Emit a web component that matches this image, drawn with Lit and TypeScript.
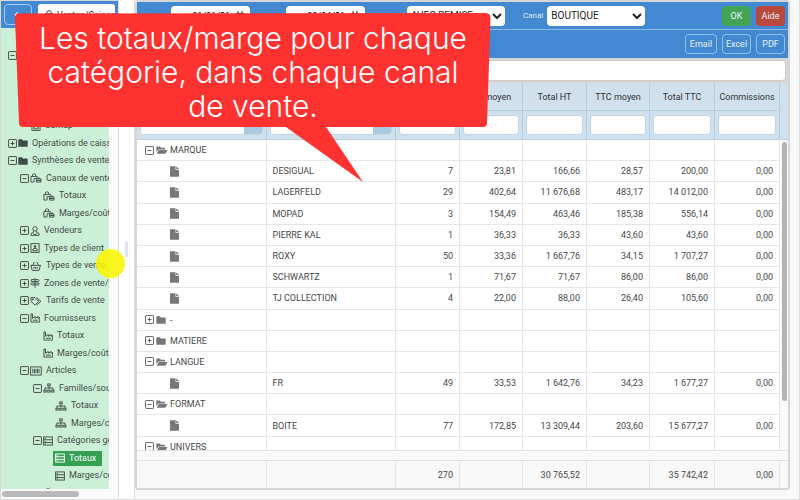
import { LitElement, html, css, svg, nothing } from "lit";
import { customElement, property } from "lit/decorators.js";
import { classMap } from "lit/directives/class-map.js";

const ICONS: Record<string, unknown> = {
  minus: svg`<rect x="1" y="1" width="14" height="14" rx="1"/><path d="M4.500 8h7"/>`,
  plus: svg`<rect x="1" y="1" width="14" height="14" rx="1"/><path d="M4.500 8h7M8 4.500v7"/>`,
  folder: svg`<path class="solid" d="M0.500 3q0-1 1-1h4.500l2 2h6.500q1 0 1 1v9h-15z"/>`,
  open: svg`<path class="solid" d="M0.500 11V3.500q0-1 1-1h4.500l2 2h5.500q1 0 1 1V7H4zM1 14l3.500-6h14l-3.500 6z"/>`,
  file: svg`<path class="solid" d="M1.500 0.500h8v5h5v10h-13zM10.500 0.500l4 4h-4z"/>`,
  bags: svg`<path d="M6 14.500H1.500v-9h10V8M4 5.500V3q0-1.500 1.500-1.500h2Q9 1.500 9 3v2.500M6.500 14.500V9h4v5.500M10.500 14.500h7V9.500h-7M12.500 9.500V8h3v1.500M10.500 12h7"/>`,
  bag: svg`<path d="M2 6h12l1 9H1zM4.500 8V4Q5 1 8 1t3.500 3v4"/>`,
  person: svg`<circle cx="8" cy="4.500" r="3.500"/><path d="M5.500 8v2L1.500 12v3h13v-3l-4-2V8M5 12l3 2 3-2"/>`,
  client: svg`<rect x="1.500" y="1" width="13" height="14"/><circle class="solid" cx="8" cy="5.500" r="2"/><path d="M4.500 12.500V10q3.500-3 7 0v2.500z"/>`,
  basket: svg`<path d="M0.500 7h17M1.500 7l2 8h11l2-8M4.500 7L7 1.500M13.500 7L11 1.500M6.500 9.500v3M9 9.500v3M11.500 9.500v3"/>`,
  sign: svg`<path d="M8 0.500v15M2 2.500h11l2 1.500-2 1.500H2zM14 8H3L1 9.500 3 11h11z"/>`,
  tags: svg`<path d="M1.500 2.500H8l6 6-6 6-6.500-6zM10.500 2.500l7 6-7 6"/><circle cx="4.500" cy="5.500" r="1"/>`,
  factory: svg`<path d="M1.500 1.500H4v7l4.500-3v3l4.500-3v3l2.500-1.500v7.500h-14zM4.500 11.500h8"/>`,
  barcode: svg`<rect x="1" y="1.500" width="17" height="13"/><path d="M4.500 4.500v7M7 4.500v7M9.500 4.500v7M12 4.500v7M14.500 4.500v7"/>`,
  tree: svg`<path d="M9.500 5v5M3 11V8h13v3"/><rect x="7.500" y="1.500" width="4" height="3"/><rect x="1.500" y="11.500" width="3.500" height="3"/><rect x="7.500" y="11.500" width="4" height="3"/><rect x="14" y="11.500" width="3.500" height="3"/>`,
  rows: svg`<rect x="1" y="1.500" width="14" height="13"/><path d="M1 6h14M1 10.500h14M3 4h1.500M3 8.500h1.500M3 12.500h1.500"/>`,
  calendar: svg`<path class="solid" d="M1 3h14v3H1zM1 7h14v8H1zM4 0.500h2v3H4zM10 0.500h2v3h-2z"/>`,
  left: svg`<path d="M14 8H3M8 3L3 8l5 5"/>`,
};
const WIDE = new Set(["bags", "tags", "barcode", "open", "tree", "basket"]);

@customElement("ui-icon")
class UiIcon extends LitElement {
  @property() name = "";
  static styles = css`
    :host { display: inline-flex; flex: none; }
    svg { display: block; height: 10px; fill: none; stroke: currentColor; stroke-width: 1.500; }
    .toggle { height: 9px; }
    .file { height: 11px; }
    .solid { fill: currentColor; stroke: none; }
  `;
  render() {
    const w = WIDE.has(this.name) ? 19 : 16;
    const toggle = this.name === "minus" || this.name === "plus";
    return html`<svg class=${classMap({ toggle, file: this.name === "file" })} viewBox="0 0 ${w} 16" aria-hidden="true">${ICONS[this.name]}</svg>`;
  }
}

type Node = { level: number; toggle?: string; icon: string; label: string; current?: boolean };
const n = (level: number, toggle: string, icon: string, label: string, current = false): Node =>
  ({ level, toggle, icon, label, current });

const NODES: Node[] = [
  n(0, "minus", "folder", "Ventes"),
  n(1, "plus", "folder", "Documents"),
  n(1, "plus", "folder", "Clients"),
  n(1, "plus", "folder", "Saisies"),
  n(1, "", "client", "Samap"),
  n(0, "plus", "folder", "Opérations de caisse"),
  n(0, "minus", "folder", "Synthèses de vente"),
  n(1, "minus", "bags", "Canaux de vente"),
  n(2, "", "bags", "Totaux"),
  n(2, "", "bags", "Marges/coûts"),
  n(1, "plus", "person", "Vendeurs"),
  n(1, "plus", "client", "Types de client"),
  n(1, "plus", "basket", "Types de vente"),
  n(1, "plus", "sign", "Zones de vente/pays"),
  n(1, "plus", "tags", "Tarifs de vente"),
  n(1, "minus", "factory", "Fournisseurs"),
  n(2, "", "factory", "Totaux"),
  n(2, "", "factory", "Marges/coûts"),
  n(1, "minus", "barcode", "Articles"),
  n(2, "minus", "tree", "Familles/sous-familles"),
  n(3, "", "tree", "Totaux"),
  n(3, "", "tree", "Marges/coûts"),
  n(2, "minus", "rows", "Catégories générales"),
  n(3, "", "rows", "Totaux", true),
  n(3, "", "rows", "Marges/coûts"),
  n(2, "plus", "person", "Occasion"),
];

@customElement("nav-tree")
class NavTree extends LitElement {
  static styles = css`
    :host { display: flex; flex-direction: column; width: 119px; flex: none; border-right: 1px solid #dcdcdc; box-sizing: border-box; border-left: 1px solid #d8d8d8; background: #fafafa; }
    header { display: flex; gap: 6px; height: 28px; box-sizing: border-box; padding: 3px; background: #4389d1; border-top: 1px solid #d8d8d8; flex: none; }
    button { font: inherit; color: #fff; background: none; border: 1px solid #a5cdf3; border-radius: 4px; width: 28px; padding: 0; display: grid; place-items: center; }
    .title { flex: 1; display: flex; align-items: center; gap: 3px; background: #fff; border-radius: 3px; padding: 0 2px 0 6px; white-space: nowrap; overflow: hidden; color: #333; }
    .view { flex: 1; min-height: 0; overflow: hidden; background: #ccf0d7; margin-right: 9px; padding-top: 19px; }
    ul { list-style: none; margin: 0; padding: 0; height: 455px; display: grid; grid-auto-rows: 1fr; }
    li { display: flex; align-items: center; padding-left: 7px; white-space: nowrap; }
    .l1 { padding-left: 19px; }
    .l2 { padding-left: 32px; }
    .leaf, .leaf.l2 { padding-left: 42px; }
    .leaf.l1 { padding-left: 30px; }
    .leaf.l3 { padding-left: 54px; }
    a { display: flex; align-items: center; gap: 4px; color: #3f4c46; text-decoration: none; margin-left: 1px; line-height: 15px; }
    .leaf a { margin-left: 0; }
    .leaf a.current { background: #35a052; color: #fff; margin-left: -2px; padding: 0 6px 0 2px; }
    .scroll { height: 10px; flex: none; display: flex; align-items: center; padding-left: 1px; }
    .thumb { width: 77px; height: 6px; border-radius: 3px; background: #b9b9b9; }
  `;
  render() {
    return html`
      <header>
        <button aria-label="Retour"><ui-icon name="left"></ui-icon></button>
        <div class="title"><ui-icon name="bag"></ui-icon>Ventes/Caisse</div>
      </header>
      <nav class="view">
        <ul>${NODES.map((x) => html`
          <li class=${classMap({ ["l" + x.level]: true, leaf: !x.toggle })}>
            ${x.toggle ? html`<ui-icon name=${x.toggle}></ui-icon>` : nothing}
            <a href="#" class=${classMap({ current: !!x.current })}><ui-icon name=${x.icon}></ui-icon>${x.label}</a>
          </li>`)}</ul>
      </nav>
      <div class="scroll"><div class="thumb"></div></div>`;
  }
}

const HEADS = ["Groupe", "Catégorie", "Quantité", "HT moyen", "Total HT", "TTC moyen", "Total TTC", "Commissions"];
type Row = { group?: string; icon?: string; cells?: string[] };
const ROWS: Row[] = [
  { group: "MARQUE", icon: "open" },
  { cells: ["DESIGUAL", "7", "23,81", "166,66", "28,57", "200,00", "0,00"] },
  { cells: ["LAGERFELD", "29", "402,64", "11 676,68", "483,17", "14 012,00", "0,00"] },
  { cells: ["MOPAD", "3", "154,49", "463,46", "185,38", "556,14", "0,00"] },
  { cells: ["PIERRE KAL", "1", "36,33", "36,33", "43,60", "43,60", "0,00"] },
  { cells: ["ROXY", "50", "33,36", "1 667,76", "34,15", "1 707,27", "0,00"] },
  { cells: ["SCHWARTZ", "1", "71,67", "71,67", "86,00", "86,00", "0,00"] },
  { cells: ["TJ COLLECTION", "4", "22,00", "88,00", "26,40", "105,60", "0,00"] },
  { group: "-", icon: "folder" },
  { group: "MATIERE", icon: "folder" },
  { group: "LANGUE", icon: "open" },
  { cells: ["FR", "49", "33,53", "1 642,76", "34,23", "1 677,27", "0,00"] },
  { group: "FORMAT", icon: "open" },
  { cells: ["BOITE", "77", "172,85", "13 309,44", "203,60", "15 677,27", "0,00"] },
  { group: "UNIVERS", icon: "open" },
];
const TOTALS = ["", "", "270", "", "30 765,52", "", "35 742,42", "0,00"];

@customElement("sales-grid")
class SalesGrid extends LitElement {
  static styles = css`
    :host { display: flex; flex-direction: column; flex: 1; min-height: 0; background: #fafafa; }
    table { width: 100%; table-layout: fixed; border-collapse: separate; border-spacing: 0; }
    .n64 { width: 64px; }
    .n63 { width: 63px; }
    .n65 { width: 65px; }
    td, th { box-sizing: border-box; padding: 0 6px; border-right: 1px solid #e6e6e6; border-bottom: 1px solid #e6e6e6; white-space: nowrap; overflow: hidden; }
    .head { padding-right: 8px; background: #d0e0ed; border-bottom: 1px solid #b9d3e6; flex: none; }
    .head th, .head td { border-color: #b3cfe4; font-weight: 400; color: #333; height: 28px; padding: 0 3px; }
    .head td { border-bottom: 0; }
    .filter { display: flex; height: 20px; border: 1px solid #c3d5e3; border-radius: 4px; background: #fff; overflow: hidden; box-sizing: border-box; }
    .filter input { flex: 1; min-width: 0; width: 100%; border: 0; padding: 0 4px; background: #fff; font: inherit; }
    .filter button { width: 18px; border: 0; background: #a9c9e0; padding: 0; }
    .body { flex: 1; min-height: 0; overflow: hidden; display: flex; border-bottom: 1px solid #e0e0e0; }
    .body table { flex: 1; height: 318px; background: #fff; color: #484848; }
    .num { text-align: right; }
    .group { display: flex; align-items: center; padding-left: 2px; }
    .gray { color: #777; margin: 0 2px; width: 12px; }
    .doc { display: flex; padding-left: 26px; color: #777; }
    .bar { width: 8px; display: flex; justify-content: center; padding-top: 2px; box-sizing: border-box; }
    .thumb { width: 5px; height: 259px; border-radius: 3px; background: #b4b4b4; }
    .foot { margin-top: 9px; padding-right: 8px; border-top: 1px solid #e0e0e0; background: #f8f8f8; color: #484848; }
    .foot td { height: 27px; border-bottom: 0; }
  `;
  cols() {
    return html`<colgroup><col><col><col class="n64"><col class="n63"><col class="n64"><col class="n63"><col class="n65"><col class="n65"></colgroup>`;
  }
  render() {
    return html`
      <div class="head"><table>${this.cols()}
        <thead>
          <tr>${HEADS.map((h) => html`<th scope="col">${h}</th>`)}</tr>
          <tr>${HEADS.map((h, i) => html`<td><div class="filter"><input aria-label="Filtrer ${h}">${i < 2 ? html`<button aria-label="Options ${h}"></button>` : nothing}</div></td>`)}</tr>
        </thead></table></div>
      <div class="body"><table>${this.cols()}
        <tbody>${ROWS.map((r) => html`<tr>
          <td>${r.group
            ? html`<div class="group"><ui-icon name=${r.icon === "open" ? "minus" : "plus"}></ui-icon><ui-icon class="gray" name=${r.icon!}></ui-icon>${r.group}</div>`
            : html`<div class="doc"><ui-icon name="file"></ui-icon></div>`}</td>
          ${(r.cells ?? Array(7).fill("")).map((c, i) => html`<td class=${i ? "num" : ""}>${c}</td>`)}
        </tr>`)}</tbody></table>
        <div class="bar"><div class="thumb"></div></div></div>
      <div class="foot"><table>${this.cols()}
        <tbody><tr>${TOTALS.map((t) => html`<td class="num">${t}</td>`)}</tr></tbody></table></div>`;
  }
}

@customElement("app-root")
class AppRoot extends LitElement {
  static styles = css`
    :host { display: flex; position: relative; height: 100vh; overflow: hidden; box-sizing: border-box; border-bottom: 1px solid #dcdcdc; background: #fff; font: 9px/14px Roboto, sans-serif; color: #333; }
    .split { width: 15px; flex: none; display: flex; align-items: center; justify-content: center; }
    .grip { width: 3px; height: 15px; background: #dde4f2; }
    main { flex: 1; min-width: 0; display: flex; flex-direction: column; background: #f9f9f9; border-left: 1px solid #dcdcdc; border-right: 1px solid #dcdcdc; padding: 0 9px 9px 0; }
    .panel { flex: 1; min-height: 0; display: flex; flex-direction: column; border: 2px solid #d6d6d6; border-radius: 3px; background: #d6d6d6; }
    .criteria { display: flex; align-items: center; height: 28px; box-sizing: border-box; background: #4389d1; border-bottom: 1px solid #8ebbe6; padding: 0 3px 0 34px; }
    .date { display: flex; align-items: center; width: 79px; height: 20px; box-sizing: border-box; background: #fff; border-radius: 4px; padding-right: 5px; margin-right: 36px; }
    .date input { flex: 1; min-width: 0; border: 0; background: none; font: inherit; text-align: right; padding: 0 5px 0 0; }
    select { height: 20px; border: 0; border-radius: 4px; background: #fff; font: inherit; font-size: 10px; color: #222; padding: 0; width: 98px; }
    .brand { margin-left: 6px; }
    .canal { display: flex; align-items: center; gap: 4px; color: #d9eafa; font-size: 8px; margin-left: 18px; }
    .fill { flex: 1; }
    .btn { height: 20px; border: 1px solid #8fc2f2; border-radius: 4px; background: none; color: #e6f2fd; font: inherit; padding: 0; width: 29px; margin-left: 5px; }
    .mail { width: 32px; }
    .ok, .help { border-color: transparent; }
    .ok { background: #43a457; }
    .help { background: #b9493c; }
    .exports { display: flex; align-items: center; justify-content: flex-end; height: 28px; background: #4389d1; padding-right: 3px; }
    .search { display: block; height: 21px; margin: 2px 2px 2px 0; border: 1px solid #ccc; border-radius: 4px; background: #fff; font: inherit; padding: 0 6px; box-sizing: border-box; }
    .cursor { position: absolute; left: 96px; top: 249px; width: 29px; height: 29px; border-radius: 50%; background: #f8f500e0; }
    .callout { position: absolute; left: 15px; top: 13px; width: 476px; height: 170px; }
    .callout svg { position: absolute; inset: 0; }
    .callout p { position: relative; margin: 0; padding-top: 8px; color: #fff; text-align: center; font: 300 30px/34px Inter, sans-serif; white-space: nowrap; }
  `;
  render() {
    return html`
      <nav-tree></nav-tree>
      <div class="split"><div class="grip"></div></div>
      <main><div class="panel">
        <div class="criteria">
          <div class="date"><input aria-label="Du" value="01/01/21"><ui-icon name="calendar"></ui-icon></div>
          <div class="date"><input aria-label="Au" value="30/04/21"><ui-icon name="calendar"></ui-icon></div>
          <select class="brand" aria-label="Enseigne"><option>AVEC REMISE</option></select>
          <label class="canal">Canal <select><option>BOUTIQUE</option></select></label>
          <div class="fill"></div>
          <button class="btn ok">OK</button><button class="btn help">Aide</button>
        </div>
        <div class="exports"><button class="btn mail">Email</button><button class="btn">Excel</button><button class="btn">PDF</button></div>
        <input class="search" aria-label="Rechercher">
        <sales-grid></sales-grid>
      </div></main>
      <div class="cursor"></div>
      <div class="callout">
        <svg width="476" height="170" viewBox="0 0 476 170" aria-hidden="true"><path fill="#ff3232" d="M4 0.500L470 0q5.500 0 5.500 5L472 110q0 4-4 4H311l37 55-77-55H8q-4 0-4-4L0 5Q0 0.500 4 0.500z"/></svg>
        <p>Les totaux/marge pour chaque<br>catégorie, dans chaque canal<br>de vente.</p>
      </div>`;
  }
}
